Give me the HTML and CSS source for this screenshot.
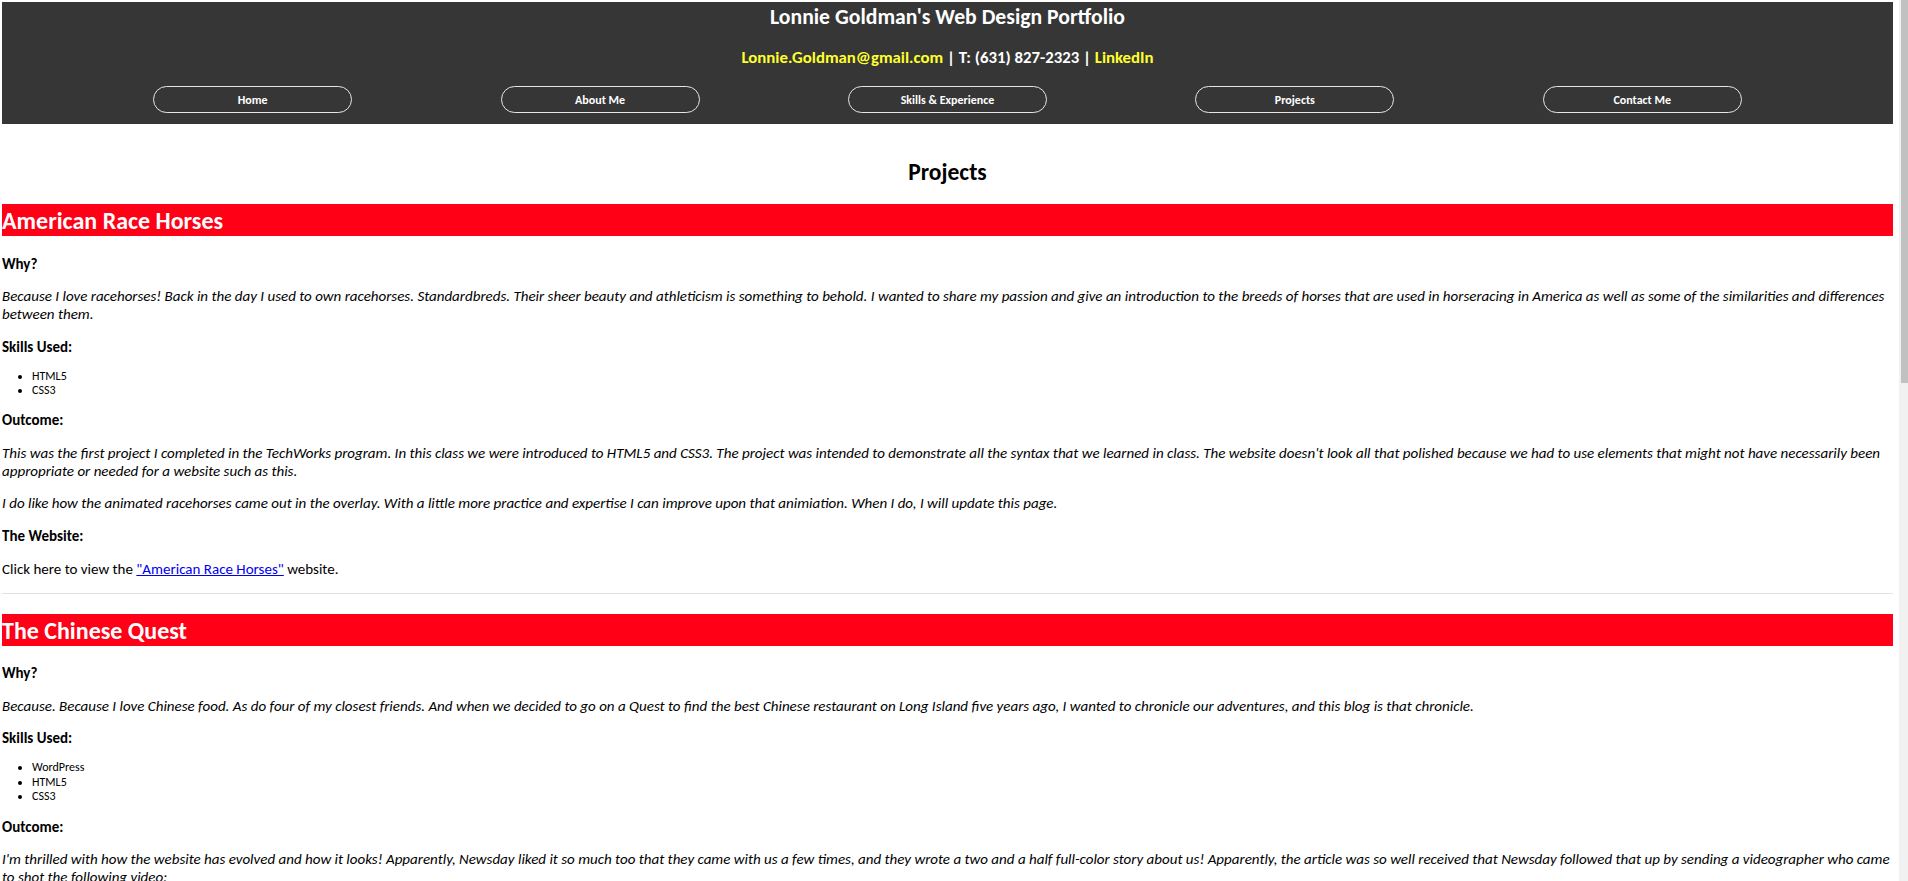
FILE: index.html
```html
<!DOCTYPE html>
<html lang="en">
<head>
<meta charset="utf-8">
<title>Lonnie Goldman's Web Design Portfolio - Projects</title>
<link rel="stylesheet" href="styles.css">
</head>
<body>
<header class="site-header">
  <h1 class="site-title">Lonnie Goldman's Web Design Portfolio</h1>
  <p class="contact"><a class="contact-link" href="#">Lonnie.Goldman@gmail.com</a> | T: (631) 827-2323 | <a class="contact-link" href="#">LinkedIn</a></p>
  <nav class="main-nav">
    <a class="nav-btn" href="#">Home</a>
    <a class="nav-btn" href="#">About Me</a>
    <a class="nav-btn" href="#">Skills &amp; Experience</a>
    <a class="nav-btn" href="#">Projects</a>
    <a class="nav-btn" href="#">Contact Me</a>
  </nav>
</header>
<main class="content">
  <h2 class="page-title">Projects</h2>
  <section class="project">
    <h2 class="project-title">American Race Horses</h2>
    <p class="label">Why?</p>
    <p class="desc">Because I love racehorses! Back in the day I used to own racehorses. Standardbreds. Their sheer beauty and athleticism is something to behold. I wanted to share my passion and give an introduction to the breeds of horses that are used in horseracing in America as well as some of the similarities and differences between them.</p>
    <p class="label label-list">Skills Used:</p>
    <ul class="skills">
      <li>HTML5</li>
      <li>CSS3</li>
    </ul>
    <p class="label">Outcome:</p>
    <p class="desc">This was the first project I completed in the TechWorks program. In this class we were introduced to HTML5 and CSS3. The project was intended to demonstrate all the syntax that we learned in class. The website doesn't look all that polished because we had to use elements that might not have necessarily been appropriate or needed for a website such as this.</p>
    <p class="desc">I do like how the animated racehorses came out in the overlay. With a little more practice and expertise I can improve upon that animiation. When I do, I will update this page.</p>
    <p class="label">The Website:</p>
    <p class="plain">Click here to view the <a class="site-link" href="#">"American Race Horses"</a> website.</p>
  </section>
  <hr class="divider">
  <section class="project">
    <h2 class="project-title">The Chinese Quest</h2>
    <p class="label">Why?</p>
    <p class="desc">Because. Because I love Chinese food. As do four of my closest friends. And when we decided to go on a Quest to find the best Chinese restaurant on Long Island five years ago, I wanted to chronicle our adventures, and this blog is that chronicle.</p>
    <p class="label label-list">Skills Used:</p>
    <ul class="skills">
      <li>WordPress</li>
      <li>HTML5</li>
      <li>CSS3</li>
    </ul>
    <p class="label">Outcome:</p>
    <p class="desc">I'm thrilled with how the website has evolved and how it looks! Apparently, Newsday liked it so much too that they came with us a few times, and they wrote a two and a half full-color story about us! Apparently, the article was so well received that Newsday followed that up by sending a videographer who came to shot the following video:</p>
  </section>
</main>
<div class="scrollbar"><div class="scrollbar-thumb"></div></div>
</body>
</html>
```

FILE: styles.css
```css
html {
  overflow: hidden;
  background: #fff;
}

body {
  margin: 2px 15px 0 2px;
  font-family: Carlito, Lato, "Liberation Sans", sans-serif;
  font-size: 15px;
  line-height: 17.9px;
  color: #000;
}

.site-header {
  background: #363636;
  padding: 3px 0 11px;
  text-align: center;
}

.site-title {
  margin: 0;
  font-size: 21.7px;
  line-height: 24px;
  font-weight: 700;
  color: #fff;
}

.contact {
  margin: 19.3px 0 0;
  font-size: 16.8px;
  line-height: 20px;
  font-weight: 700;
  color: #fff;
}

.contact-link {
  color: #ffff2e;
  text-decoration: none;
}

.main-nav {
  display: flex;
  justify-content: space-around;
  width: 1737px;
  margin: 17.7px auto 0;
}

.nav-btn {
  box-sizing: border-box;
  width: 199px;
  height: 27px;
  border: 1px solid #e6e6e6;
  border-radius: 14px;
  color: #fff;
  font-size: 12px;
  line-height: 27px;
  font-weight: 700;
  text-align: center;
  text-decoration: none;
}

.page-title {
  margin: 35.7px 0 0;
  padding-bottom: 1px;
  text-align: center;
  font-size: 23.5px;
  line-height: 24px;
  font-weight: 700;
}

.project-title {
  margin: 19.5px 0;
  padding: 2px 0 1px;
  background: #ff0016;
  color: #fff;
  font-size: 24px;
  line-height: 29px;
  font-weight: 700;
}

.label {
  margin: 14.667px 0;
  font-weight: 700;
}

.label-list {
  margin-bottom: 0;
}

.desc {
  margin: 14.667px 0;
  font-style: italic;
}

.plain {
  margin: 14.667px 0;
}

.skills {
  margin: 12px 0 14.667px;
  padding-left: 30px;
  font-size: 12px;
  line-height: 14.6px;
}

.site-link {
  color: #0000ee;
  text-decoration: underline;
}

.divider {
  margin: 14.667px 0 0;
  height: 0;
  border: 0;
  border-top: 1px solid #e3e3e3;
}

.scrollbar {
  position: fixed;
  top: 0;
  right: 0;
  width: 9px;
  height: 100%;
  background: #f1f1f1;
}

.scrollbar-thumb {
  margin-left: 2px;
  height: 383px;
  background: #c1c1c1;
}
```
